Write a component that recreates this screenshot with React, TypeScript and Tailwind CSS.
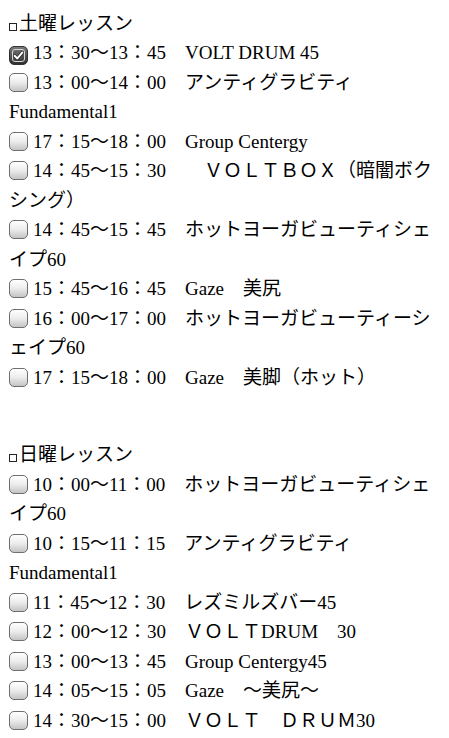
type Lesson = {
  time: string;
  lines: string[];
  checked?: boolean;
};

const saturday: Lesson[] = [
  { time: "13：30〜13：45", lines: ["VOLT DRUM 45"], checked: true },
  { time: "13：00〜14：00", lines: ["アンティグラビティ", "Fundamental1"] },
  { time: "17：15〜18：00", lines: ["Group Centergy"] },
  { time: "14：45〜15：30", lines: ["　ＶＯＬＴＢＯＸ（暗闇ボク", "シング）"] },
  { time: "14：45〜15：45", lines: ["ホットヨーガビューティシェ", "イプ60"] },
  { time: "15：45〜16：45", lines: ["Gaze　美尻"] },
  { time: "16：00〜17：00", lines: ["ホットヨーガビューティーシ", "ェイプ60"] },
  { time: "17：15〜18：00", lines: ["Gaze　美脚（ホット）"] },
];

const sunday: Lesson[] = [
  { time: "10：00〜11：00", lines: ["ホットヨーガビューティシェ", "イプ60"] },
  { time: "10：15〜11：15", lines: ["アンティグラビティ", "Fundamental1"] },
  { time: "11：45〜12：30", lines: ["レズミルズバー45"] },
  { time: "12：00〜12：30", lines: ["ＶＯＬＴDRUM　30"] },
  { time: "13：00〜13：45", lines: ["Group Centergy45"] },
  { time: "14：05〜15：05", lines: ["Gaze　〜美尻〜"] },
  { time: "14：30〜15：00", lines: ["ＶＯＬＴ　ＤＲＵＭ30"] },
];

// iOS Safari 風のチェックボックス
function Check({ checked }: { checked?: boolean }) {
  if (checked) {
    return (
      <span className="relative mr-[5px] inline-flex h-[19px] w-[19px] items-center justify-center rounded-[5px] border border-[#333] bg-gradient-to-b from-[#7a7a7a] to-[#2f2f2f] align-[-3px]">
        <span className="absolute inset-[2px] rounded-[3px] border border-[#d8d8d8]" />
        <svg viewBox="0 0 16 16" className="relative h-[13px] w-[13px]">
          <path d="M3.2 8.4 L6.6 11.6 L12.8 4.2" fill="none" stroke="#222" strokeWidth="4" strokeLinecap="round" strokeLinejoin="round" />
          <path d="M3.2 8.4 L6.6 11.6 L12.8 4.2" fill="none" stroke="#fff" strokeWidth="2.4" strokeLinecap="round" strokeLinejoin="round" />
        </svg>
      </span>
    );
  }
  return (
    <span className="mr-[5px] inline-block h-[19px] w-[19px] rounded-[5px] border border-[#6e6e6e] bg-gradient-to-b from-[#ffffff] via-[#ececec] to-[#c4c4c4] align-[-3px]" />
  );
}

function Heading({ label }: { label: string }) {
  return (
    <div>
      <span className="mr-[2px] inline-block h-[8px] w-[8px] border border-[#222] align-[-1px]" />
      {label}
    </div>
  );
}

function Row({ lesson }: { lesson: Lesson }) {
  return (
    <div>
      <div>
        <Check checked={lesson.checked} />
        {lesson.time}　{lesson.lines[0]}
      </div>
      {lesson.lines.slice(1).map((l) => (
        <div key={l}>{l}</div>
      ))}
    </div>
  );
}

export default function App() {
  return (
    <div
      className="min-h-[738px] whitespace-nowrap bg-white px-[9px] pt-[8.5px] text-[19px] leading-[29.5px] text-black"
      style={{ fontFamily: '"Liberation Serif", "Noto Sans CJK JP", serif' }}
    >
      <section>
        <Heading label="土曜レッスン" />
        {saturday.map((l, i) => (
          <Row key={i} lesson={l} />
        ))}
      </section>
      <section className="mt-[48px]">
        <Heading label="日曜レッスン" />
        {sunday.map((l, i) => (
          <Row key={i} lesson={l} />
        ))}
      </section>
    </div>
  );
}
